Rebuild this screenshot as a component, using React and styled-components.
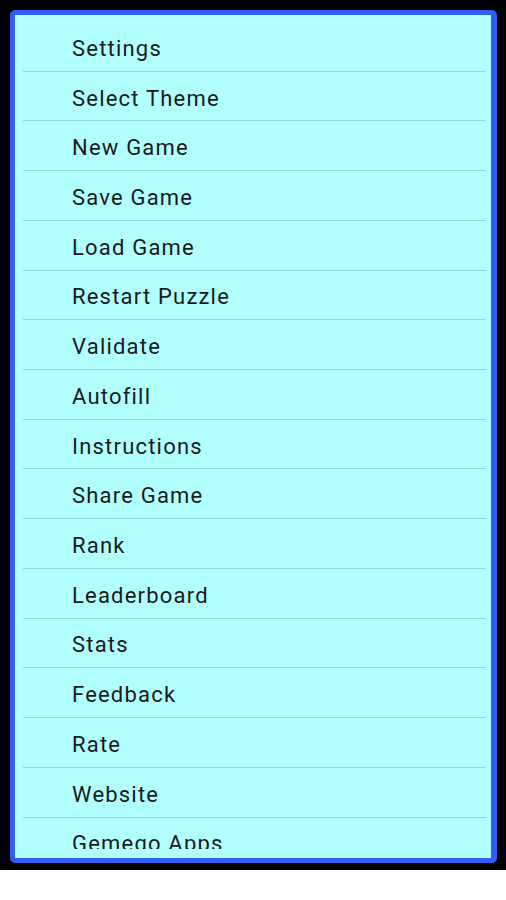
import React from "react";
import styled, { createGlobalStyle } from "styled-components";

const GlobalStyle = createGlobalStyle`
  html, body {
    margin: 0;
    padding: 0;
    background: #ffffff;
  }
`;

const Screen = styled.div`
  box-sizing: border-box;
  width: 506px;
  height: 870px;
  background: #000000;
  padding: 10px 9px 7px 10px;
`;

const Panel = styled.div`
  box-sizing: border-box;
  height: 100%;
  border: 5px solid #2e5ef4;
  border-right-width: 6px;
  border-radius: 5px;
  background: #b2ffff;
  padding: 7px 5px 9px 8px;
`;

const MenuList = styled.ul`
  list-style: none;
  margin: 0;
  padding: 0;
  height: 100%;
  overflow: hidden;
`;

const MenuItem = styled.li`
  box-sizing: border-box;
  height: 49.73px;
  display: flex;
  align-items: center;
  padding: 4px 0 0 49px;
  border-bottom: 1px solid #92d8d6;
  font-family: Roboto, "Liberation Sans", sans-serif;
  font-size: 22px;
  letter-spacing: 1.2px;
  color: #1a1a1a;
`;

const items = [
  "Settings",
  "Select Theme",
  "New Game",
  "Save Game",
  "Load Game",
  "Restart Puzzle",
  "Validate",
  "Autofill",
  "Instructions",
  "Share Game",
  "Rank",
  "Leaderboard",
  "Stats",
  "Feedback",
  "Rate",
  "Website",
  "Gemego Apps",
];

const App = () => {
  return (
    <>
      <GlobalStyle />
      <Screen>
        <Panel>
          <MenuList>
            {items.map((label) => (
              <MenuItem key={label}>{label}</MenuItem>
            ))}
          </MenuList>
        </Panel>
      </Screen>
    </>
  );
};

export default App;
